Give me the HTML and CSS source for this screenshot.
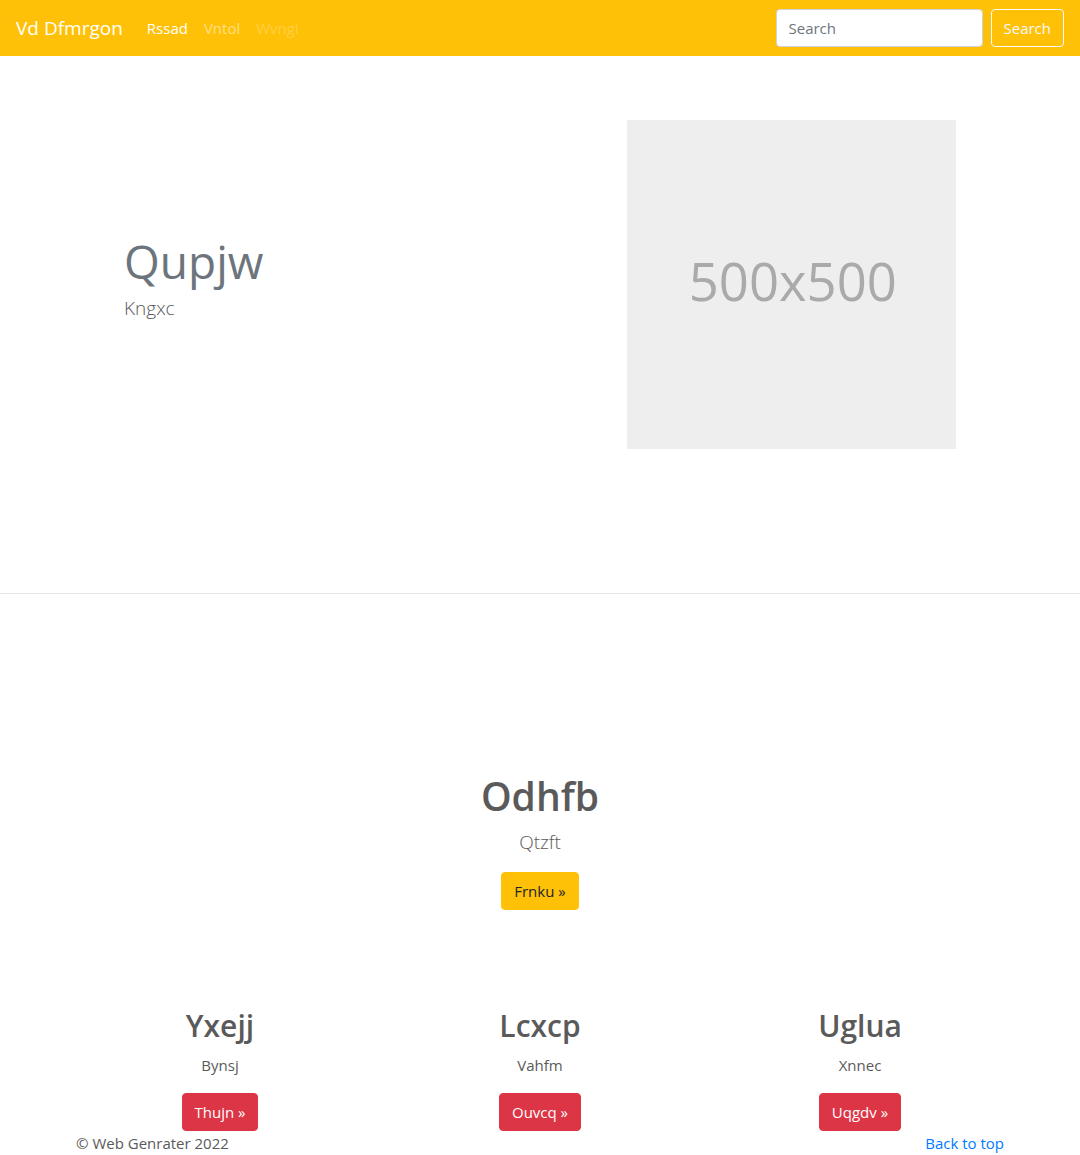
FILE: index.html
```html
<!DOCTYPE html>
<html lang="en">
<head>
<meta charset="utf-8">
<meta name="viewport" content="width=device-width, initial-scale=1">
<title>Vd Dfmrgon</title>
<link rel="stylesheet" href="styles.css">
</head>
<body>
<header class="navbar">
  <a class="brand" href="#">Vd Dfmrgon</a>
  <nav class="nav">
    <a class="nav-link active" href="#">Rssad</a>
    <a class="nav-link" href="#">Vntol</a>
    <a class="nav-link disabled" href="#" aria-disabled="true">Wvngi</a>
  </nav>
  <form class="search">
    <input class="search-input" type="search" placeholder="Search" aria-label="Search">
    <button class="btn btn-outline" type="submit">Search</button>
  </form>
</header>
<main>
  <section class="hero">
    <div class="hero-text">
      <h1 class="hero-title">Qupjw</h1>
      <p class="lead hero-lead">Kngxc</p>
    </div>
    <div class="hero-media">
      <svg class="placeholder" viewBox="0 0 500 500" role="img" aria-label="500x500">
        <rect width="500" height="500" fill="#eee"/>
        <text x="252" y="275" text-anchor="middle" font-size="80" fill="#aaa">500x500</text>
      </svg>
    </div>
  </section>
  <hr class="divider">
  <section class="intro">
    <h2 class="intro-title">Odhfb</h2>
    <p class="lead intro-lead">Qtzft</p>
    <button class="btn btn-warning" type="button">Frnku »</button>
  </section>
  <section class="columns container">
    <article class="column">
      <h3 class="column-title">Yxejj</h3>
      <p class="column-text">Bynsj</p>
      <button class="btn btn-danger" type="button">Thujn »</button>
    </article>
    <article class="column">
      <h3 class="column-title">Lcxcp</h3>
      <p class="column-text">Vahfm</p>
      <button class="btn btn-danger" type="button">Ouvcq »</button>
    </article>
    <article class="column">
      <h3 class="column-title">Uglua</h3>
      <p class="column-text">Xnnec</p>
      <button class="btn btn-danger" type="button">Uqgdv »</button>
    </article>
  </section>
</main>
<footer class="footer container">
  <span>© Web Genrater 2022</span>
  <a class="footer-link" href="#">Back to top</a>
</footer>
</body>
</html>
```

FILE: styles.css
```css
* { box-sizing: border-box; }

body {
  margin: 0;
  background: #fff;
  color: #5a5a5a;
  font: 400 15px/24px "Segoe UI", "Open Sans", "Noto Sans", sans-serif;
}

h1, h2, h3, p { margin: 0; }
a { text-decoration: none; }

.container {
  width: 100%;
  max-width: 960px;
  margin: 0 auto;
}

.navbar {
  display: flex;
  align-items: center;
  height: 56px;
  padding: 0 16px;
  background: #ffc107;
}

.brand {
  margin-right: 16px;
  color: #fff;
  font-size: 19px;
  line-height: 30px;
}

.nav { display: flex; flex: 1; }
.nav-link { padding: 8px; color: rgba(255, 255, 255, 0.5); }
.nav-link.active { color: #fff; }
.nav-link.disabled { color: rgba(255, 255, 255, 0.25); }

.search { display: flex; gap: 8px; }

.search-input {
  width: 207px;
  height: 38px;
  padding: 6px 12px;
  border: 1px solid #ced4da;
  border-radius: 4px;
  background: #fff;
  color: #495057;
  font: inherit;
  appearance: none;
}
.search-input::placeholder { color: #6c757d; opacity: 1; }

.btn {
  height: 38px;
  padding: 6px 12px;
  border: 1px solid transparent;
  border-radius: 4px;
  font: inherit;
  cursor: pointer;
}
.btn-outline { border-color: #f8f9fa; background: transparent; color: #f8f9fa; }
.btn-warning { border-color: #ffc107; background: #ffc107; color: #212529; }
.btn-danger { border-color: #dc3545; background: #dc3545; color: #fff; }

.hero {
  display: grid;
  grid-template-columns: 1fr 1fr;
  padding: 64px 76px 144px;
}

.hero-text {
  display: flex;
  flex-direction: column;
  justify-content: center;
  padding: 0 48px;
}

.hero-title {
  margin-bottom: 4px;
  color: #6c757d;
  font-size: 46px;
  font-weight: 400;
  line-height: 58px;
}

.lead { font-size: 19px; font-weight: 300; line-height: 28px; }
.hero-lead { margin-bottom: 16px; }

.hero-media { padding: 0 48px 0 87px; }
.placeholder { display: block; width: 100%; height: auto; }

.divider {
  height: 1px;
  margin: 0;
  border: 0;
  background: #e5e5e5;
}

.intro { padding: 178px 16px 97px; text-align: center; }
.intro-title { font-size: 39px; font-weight: 600; line-height: 48px; }
.intro-lead { margin: 8px 0 16px; }

.columns {
  display: grid;
  grid-template-columns: repeat(3, 1fr);
  text-align: center;
}
.column-title { font-size: 30px; font-weight: 600; line-height: 38px; }
.column-text { margin: 8px 0 16px; }

.footer { display: flex; justify-content: space-between; padding: 0 16px; }
.footer-link { color: #007bff; }
```
